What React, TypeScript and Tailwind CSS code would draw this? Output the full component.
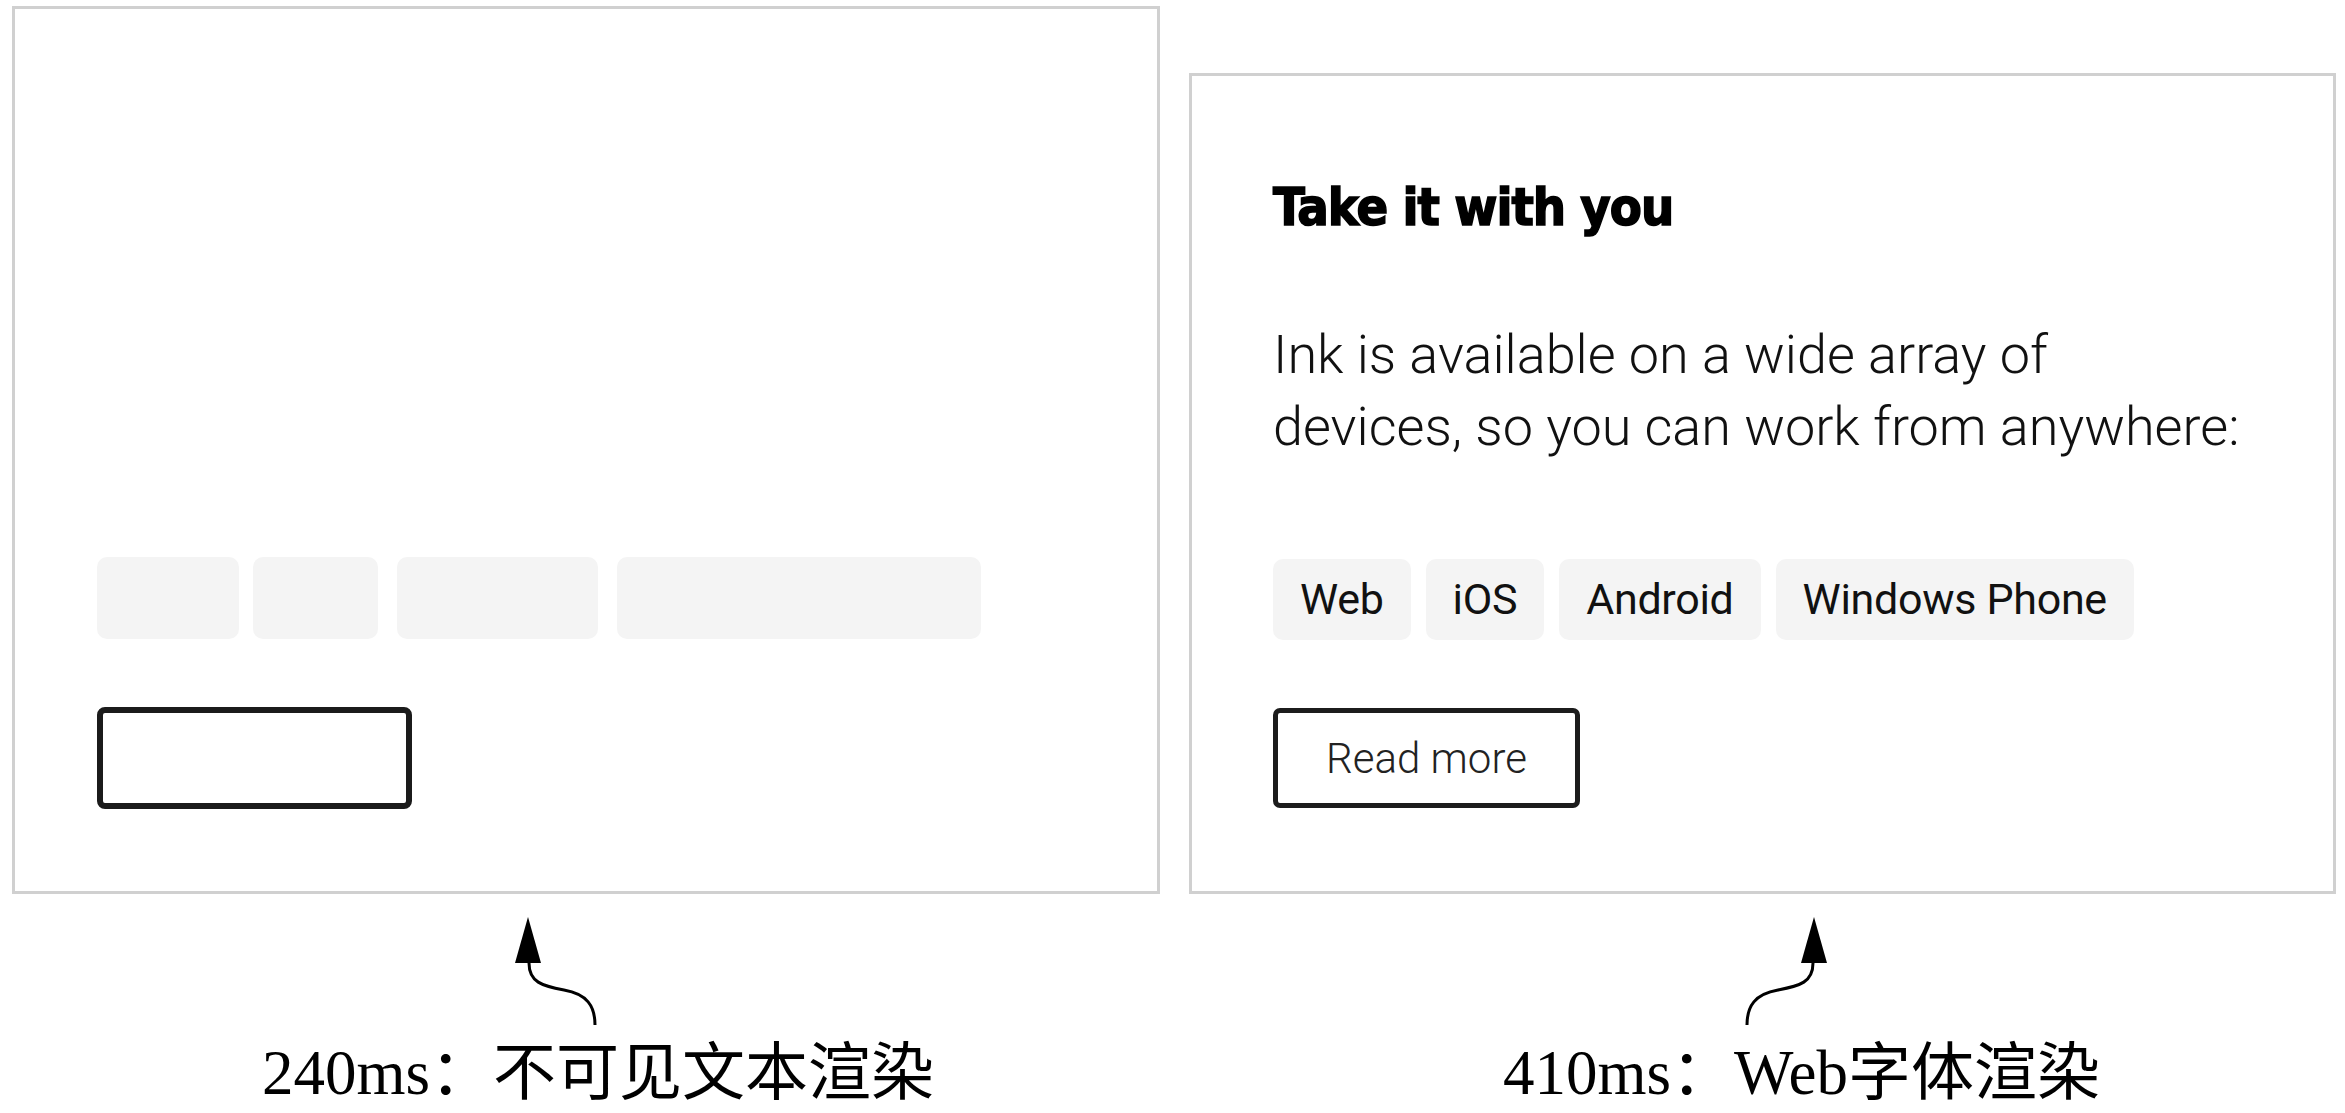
import React from "react";

const roboto = { fontFamily: 'Roboto, "Noto Sans", "Liberation Sans", sans-serif' };
const titleFont = {
  fontFamily: '"DejaVu Sans Condensed", "DejaVu Sans", "Liberation Sans", sans-serif',
};
const captionFont = {
  fontFamily: '"Liberation Serif", "Noto Sans CJK SC", serif',
};

function Chip({ label }: { label: string }) {
  return (
    <div
      className="h-[81px] px-[27px] flex items-center rounded-[10px] bg-[#f4f4f4] text-[43px] tracking-[-0.3px] text-[#111] whitespace-nowrap"
      style={roboto}
    >
      {label}
    </div>
  );
}

function LeftPanel() {
  return (
    <div className="w-[1148px] h-[888px] border-[3px] border-[#d0d0d0] bg-white flex flex-col justify-end pl-[82px] pb-[82px]">
      <div className="flex h-[82px]">
        <div className="w-[142px] h-full rounded-[10px] bg-[#f4f4f4]" />
        <div className="w-[125px] h-full rounded-[10px] bg-[#f4f4f4] ml-[14px]" />
        <div className="w-[201px] h-full rounded-[10px] bg-[#f4f4f4] ml-[19px]" />
        <div className="w-[364px] h-full rounded-[10px] bg-[#f4f4f4] ml-[19px]" />
      </div>
      <div className="mt-[68px] w-[315px] h-[102px] border-[6px] border-[#1b1b1b] rounded-[8px]" />
    </div>
  );
}

function RightPanel() {
  return (
    <div className="w-[1147px] h-[821px] border-[3px] border-[#d0d0d0] bg-white flex flex-col pl-[81px] pt-[101px]">
      <h2
        className="text-[52px] leading-[60px] font-bold text-black tracking-[-1px] whitespace-nowrap font-stretch-condensed [-webkit-text-stroke:1.5px_black]"
        style={titleFont}
      >
        Take it with you
      </h2>
      <p
        className="mt-[82px] text-[54px] leading-[72px] font-light text-[#111] whitespace-nowrap"
        style={roboto}
      >
        <span className="block">Ink is available on a wide array of</span>
        <span className="block">devices, so you can work from anywhere:</span>
      </p>
      <div className="mt-[96px] flex gap-[15px]">
        <Chip label="Web" />
        <Chip label="iOS" />
        <Chip label="Android" />
        <Chip label="Windows Phone" />
      </div>
      <div
        className="mt-[68px] w-[307px] h-[100px] border-[5px] border-[#1c1c1c] rounded-[7px] flex items-center justify-center text-[42px] font-light text-[#222]"
        style={roboto}
      >
        Read more
      </div>
    </div>
  );
}

function Arrow({ mirrored }: { mirrored?: boolean }) {
  return (
    <svg width="1148" height="140" viewBox="0 0 1148 140" className="block">
      {mirrored ? (
        <g>
          <polygon points="625,23 612,69 638,69" fill="#000" />
          <path
            d="M624 69 C 624 88, 611 92, 589 96 C 566 100, 558 112, 558 131"
            fill="none"
            stroke="#000"
            strokeWidth="3"
          />
        </g>
      ) : (
        <g>
          <polygon points="516,23 503,69 529,69" fill="#000" />
          <path
            d="M517 69 C 517 88, 530 92, 552 96 C 575 100, 583 112, 583 131"
            fill="none"
            stroke="#000"
            strokeWidth="3"
          />
        </g>
      )}
    </svg>
  );
}

export default function App() {
  return (
    <div className="w-[2345px] h-[1113px] bg-white overflow-hidden">
      <div className="flex items-end pl-[12px] pt-[6px] gap-[29px]">
        <LeftPanel />
        <RightPanel />
      </div>
      <div className="flex pl-[12px] gap-[29px]">
        <div className="w-[1148px]">
          <Arrow />
          <div
            className="mt-[8px] h-[63px] text-[63px] leading-[63px] text-black whitespace-nowrap pl-[250px]"
            style={captionFont}
          >
            240ms：不可见文本渲染
          </div>
        </div>
        <div className="w-[1147px]">
          <Arrow mirrored />
          <div
            className="mt-[8px] h-[63px] text-[63px] leading-[63px] text-black whitespace-nowrap pl-[314px]"
            style={captionFont}
          >
            410ms：Web字体渲染
          </div>
        </div>
      </div>
    </div>
  );
}
